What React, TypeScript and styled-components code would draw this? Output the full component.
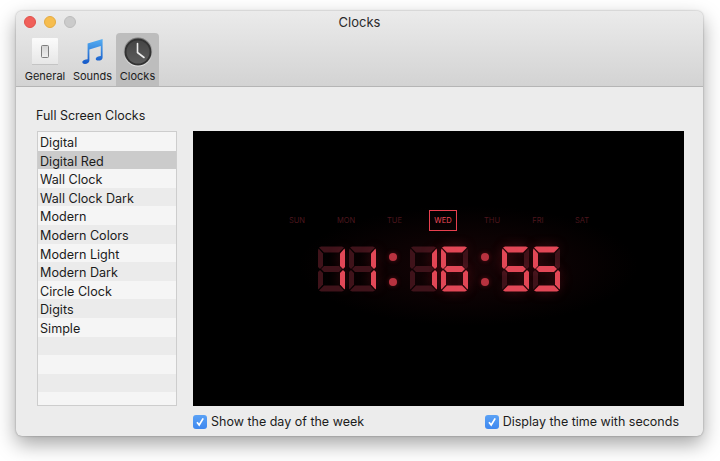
import React from 'react'
import styled, { createGlobalStyle } from 'styled-components'

const GlobalStyle = createGlobalStyle`
  html, body {
    margin: 0;
    background: #fff;
    font-family: Inter, "Liberation Sans", sans-serif;
    color: #1c1c1c;
  }
`

const PageStyled = styled.div`
  width: 720px;
  height: 461px;
  padding: 11px 17px 25px 16px;
  box-sizing: border-box;
  overflow: hidden;
`

const WindowStyled = styled.div`
  height: 425px;
  border-radius: 6px;
  overflow: hidden;
  display: flex;
  flex-direction: column;
  background: #ececec;
  box-shadow: 0 8px 20px rgba(0, 0, 0, 0.36), 0 0 2px rgba(0, 0, 0, 0.35);
`

const TitleBarStyled = styled.div`
  height: 76px;
  flex: none;
  box-sizing: border-box;
  display: flex;
  flex-direction: column;
  background: linear-gradient(#ebebeb, #d3d3d3);
  border-bottom: 1px solid #b5b5b5;
`

const TitleRowStyled = styled.div`
  height: 22px;
  flex: none;
  display: grid;
  grid-template-columns: 1fr auto 1fr;
  align-items: center;
`

const LightsStyled = styled.div`
  display: flex;
  gap: 8px;
  padding-left: 8px;
`

const LightStyled = styled.span<{ $color: string; $edge: string }>`
  width: 12px;
  height: 12px;
  border-radius: 50%;
  box-sizing: border-box;
  background: ${props => props.$color};
  border: 1px solid ${props => props.$edge};
`

const TitleStyled = styled.div`
  font-size: 13px;
  color: #2a2a2a;
`

const ToolbarStyled = styled.div`
  flex: 1;
  display: flex;
  padding-left: 5px;
`

const ToolStyled = styled.div<{ $width: number; $active?: boolean }>`
  width: ${props => props.$width}px;
  display: flex;
  flex-direction: column;
  align-items: center;
  border-radius: 4px 4px 0 0;
  background: ${props => (props.$active ? '#bdbdbd' : 'transparent')};
`

const ToolIconStyled = styled.div`
  height: 37px;
  display: flex;
  align-items: center;
  justify-content: center;
`

const ToolLabelStyled = styled.div`
  font-size: 11px;
  line-height: 13px;
  white-space: nowrap;
`

const ContentStyled = styled.div`
  flex: 1;
  display: flex;
  flex-direction: column;
  padding: 21px 19px 0 21px;
`

const HeadingStyled = styled.div`
  font-size: 12.5px;
  line-height: 15px;
  margin: 0 0 8px -1px;
`

const MainStyled = styled.div`
  display: flex;
  gap: 16px;
`

const ListStyled = styled.div`
  width: 140px;
  height: 275px;
  box-sizing: border-box;
  border: 1px solid #cdcdcd;
  background: #f5f5f5;
  overflow: hidden;
  flex: none;
`

const RowStyled = styled.div<{ $selected: boolean; $odd: boolean }>`
  height: 18.6px;
  line-height: 21.6px;
  padding-left: 2px;
  font-size: 12.6px;
  background: ${props => (props.$selected ? '#cbcbcb' : props.$odd ? '#ebebeb' : '#f5f5f5')};
`

const ScreenStyled = styled.div`
  width: 491px;
  height: 275px;
  background: radial-gradient(ellipse 170px 60px at 56% 49%, #170406, #000 100%);
  display: flex;
  flex-direction: column;
  align-items: center;
  padding-top: 79px;
  box-sizing: border-box;
`

const DaysStyled = styled.div`
  display: grid;
  grid-template-columns: 49px 49px 48px 49px 49px 43px 45px;
  justify-items: center;
  align-items: center;
  height: 21px;
`

const DayStyled = styled.div<{ $active: boolean }>`
  font-size: 7.5px;
  width: 28px;
  height: 21px;
  box-sizing: border-box;
  display: flex;
  align-items: center;
  justify-content: center;
  color: ${props => (props.$active ? '#ee4a58' : '#4d161e')};
  border: 1px solid ${props => (props.$active ? '#e8404f' : 'transparent')};
`

const TimeStyled = styled.div`
  display: flex;
  align-items: flex-start;
  margin-top: 15px;
`

const GroupStyled = styled.div`
  display: flex;
  gap: 4px;
`

const ColonStyled = styled.div`
  width: 34px;
  height: 46px;
  display: flex;
  flex-direction: column;
  align-items: center;
  gap: 17px;
  padding-top: 7px;
  box-sizing: border-box;
`

const DotStyled = styled.span`
  width: 8px;
  height: 8px;
  border-radius: 50%;
  background: #b8323f;
  box-shadow: 0 0 5px rgba(200, 40, 55, 0.4);
`

const OptionsStyled = styled.div`
  display: flex;
  justify-content: space-between;
  margin-left: 156px;
  padding-right: 5px;
  margin-top: 9px;
`

const OptionStyled = styled.label`
  display: flex;
  align-items: center;
  gap: 4px;
  font-size: 12.5px;
  line-height: 14px;
`

const CheckStyled = styled.span`
  width: 14px;
  height: 14px;
  border-radius: 3px;
  background: linear-gradient(#5aa1f5, #3f88ef);
  display: flex;
  align-items: center;
  justify-content: center;
`

const segments = {
  a: '3,0.5 24,0.5 26,1.5 21,6.5 6,6.5 1,1.5',
  b: '26.5,2.5 27,4.5 27,21 25,23 22,20 22,7.5',
  c: '25,24 27,26 27,42.5 26.5,43.5 22,38.5 22,27',
  d: '6,39.5 21,39.5 26,44.5 24,45.5 3,45.5 1,44.5',
  e: '0.5,43.5 0,42.5 0,26 2,24 5,27 5,38.5',
  f: '0.5,2.5 5,7.5 5,20 2,23 0,21 0,4.5',
  g: '6,20 21,20 24,23 21,26 6,26 3,23',
}

const digitMap: Record<string, string> = {
  '1': 'bc',
  '5': 'afgcd',
  '6': 'afgcde',
}

function Digit({ value }: { value: string }) {
  const lit = digitMap[value]
  return (
    <svg width="27" height="46" viewBox="0 0 27 46" style={{ overflow: 'visible' }}>
      {Object.entries(segments).map(([name, points]) =>
        lit.includes(name) ? (
          <polygon
            key={name}
            points={points}
            fill="#e24857"
            style={{ filter: 'drop-shadow(0 0 6px rgba(230, 50, 70, 0.3))' }}
          />
        ) : (
          <polygon key={name} points={points} fill="#3f131a" />
        ),
      )}
    </svg>
  )
}

function GeneralIcon() {
  return (
    <svg width="26" height="27" viewBox="0 0 26 27">
      <defs>
        <linearGradient id="genFace" x1="0" y1="0" x2="0" y2="1">
          <stop offset="0" stopColor="#fbfbfb" />
          <stop offset="1" stopColor="#e6e6e6" />
        </linearGradient>
        <linearGradient id="genSwitch" x1="0" y1="0" x2="0" y2="1">
          <stop offset="0" stopColor="#d2d2d2" />
          <stop offset="1" stopColor="#efefef" />
        </linearGradient>
      </defs>
      <rect width="26" height="27" rx="1" fill="url(#genFace)" />
      <path d="M0 26.5h26" stroke="#c4c4c4" />
      <rect x="9.5" y="7.5" width="7" height="12" rx="1" fill="url(#genSwitch)" stroke="#7d7d7d" />
    </svg>
  )
}

function SoundsIcon() {
  return (
    <svg width="21" height="25" viewBox="0 0 21 25">
      <defs>
        <linearGradient id="noteBlue" x1="0" y1="0" x2="0" y2="1">
          <stop offset="0" stopColor="#55aef2" />
          <stop offset="1" stopColor="#1458c8" />
        </linearGradient>
      </defs>
      <path
        d="M5.6 4.4 L20.6 0 V18.4 C20.6 20.6 18.4 21.6 16.4 21.6 C14.4 21.6 13.4 20.6 13.8 19.4 C14.2 18.2 16.4 17.2 18.8 17 V7 L7.4 10.4 V21.8 C7.4 23.8 5 25 3 25 C1 25 0 23.8 0.4 22.6 C0.8 21.4 3 20.4 5.6 20.2 Z"
        fill="url(#noteBlue)"
      />
    </svg>
  )
}

function ClocksIcon() {
  return (
    <svg width="30" height="30" viewBox="0 0 30 30">
      <defs>
        <linearGradient id="clockRim" x1="0" y1="0" x2="0" y2="1">
          <stop offset="0" stopColor="#7a7a7a" />
          <stop offset="1" stopColor="#e8e8e8" />
        </linearGradient>
        <linearGradient id="clockFace" x1="0" y1="0" x2="0" y2="1">
          <stop offset="0" stopColor="#454545" />
          <stop offset="1" stopColor="#5c5c5c" />
        </linearGradient>
      </defs>
      <circle cx="15" cy="15" r="14.5" fill="url(#clockRim)" />
      <circle cx="15" cy="15" r="13.5" fill="#333" />
      <circle cx="15" cy="15" r="11.5" fill="url(#clockFace)" />
      <path d="M14.5 6.5 V15.5 L21 20.5" fill="none" stroke="#ececec" strokeWidth="1.6" strokeLinecap="round" />
    </svg>
  )
}

function CheckMark() {
  return (
    <svg width="10" height="10" viewBox="0 0 10 10">
      <path d="M2 5.2 L4.2 8 L8.2 1.4" fill="none" stroke="#fff" strokeWidth="1.7" />
    </svg>
  )
}

const clocks = [
  'Digital',
  'Digital Red',
  'Wall Clock',
  'Wall Clock Dark',
  'Modern',
  'Modern Colors',
  'Modern Light',
  'Modern Dark',
  'Circle Clock',
  'Digits',
  'Simple',
  '',
  '',
  '',
  '',
]

const days = ['SUN', 'MON', 'TUE', 'WED', 'THU', 'FRI', 'SAT']

function App() {
  return (
    <PageStyled>
      <GlobalStyle />
      <WindowStyled>
        <TitleBarStyled>
          <TitleRowStyled>
            <LightsStyled>
              <LightStyled $color="#f0605a" $edge="#e0504a" />
              <LightStyled $color="#f6bd4f" $edge="#e4aa40" />
              <LightStyled $color="#cbcbcb" $edge="#bcbcbc" />
            </LightsStyled>
            <TitleStyled>Clocks</TitleStyled>
          </TitleRowStyled>
          <ToolbarStyled>
            <ToolStyled $width={48}>
              <ToolIconStyled><GeneralIcon /></ToolIconStyled>
              <ToolLabelStyled>General</ToolLabelStyled>
            </ToolStyled>
            <ToolStyled $width={47}>
              <ToolIconStyled><SoundsIcon /></ToolIconStyled>
              <ToolLabelStyled>Sounds</ToolLabelStyled>
            </ToolStyled>
            <ToolStyled $width={43} $active>
              <ToolIconStyled><ClocksIcon /></ToolIconStyled>
              <ToolLabelStyled>Clocks</ToolLabelStyled>
            </ToolStyled>
          </ToolbarStyled>
        </TitleBarStyled>
        <ContentStyled>
          <HeadingStyled>Full Screen Clocks</HeadingStyled>
          <MainStyled>
            <ListStyled>
              {clocks.map((name, index) => (
                <RowStyled key={index} $selected={index === 1} $odd={index % 2 === 1}>
                  {name}
                </RowStyled>
              ))}
            </ListStyled>
            <ScreenStyled>
              <DaysStyled>
                {days.map(day => (
                  <DayStyled key={day} $active={day === 'WED'}>{day}</DayStyled>
                ))}
              </DaysStyled>
              <TimeStyled>
                <GroupStyled><Digit value="1" /><Digit value="1" /></GroupStyled>
                <ColonStyled><DotStyled /><DotStyled /></ColonStyled>
                <GroupStyled><Digit value="1" /><Digit value="6" /></GroupStyled>
                <ColonStyled><DotStyled /><DotStyled /></ColonStyled>
                <GroupStyled><Digit value="5" /><Digit value="5" /></GroupStyled>
              </TimeStyled>
            </ScreenStyled>
          </MainStyled>
          <OptionsStyled>
            <OptionStyled><CheckStyled><CheckMark /></CheckStyled>Show the day of the week</OptionStyled>
            <OptionStyled><CheckStyled><CheckMark /></CheckStyled>Display the time with seconds</OptionStyled>
          </OptionsStyled>
        </ContentStyled>
      </WindowStyled>
    </PageStyled>
  )
}

export default App
